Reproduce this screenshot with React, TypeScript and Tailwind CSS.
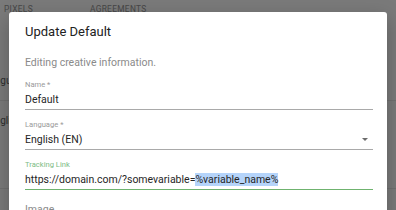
import React from 'react';

const font = { fontFamily: 'Roboto, "Noto Sans", sans-serif' };

function Field({
  label,
  value,
  focused = false,
  select = false,
}: {
  label: string;
  value: React.ReactNode;
  focused?: boolean;
  select?: boolean;
}) {
  return (
    <div className="mt-[10px] first:mt-0">
      <div
        className={`h-[10px] text-[7.6px] leading-[10px] ${focused ? 'text-[#7dbb85]' : 'text-[#9a9a9a]'}`}
      >
        {label}
      </div>
      <div
        className={`relative mt-[2px] pb-[1px] ${
          focused ? 'border-b border-[#6fb36f]' : 'border-b border-[#a9a9a9]'
        }`}
      >
        <div className="h-[16px] whitespace-nowrap text-[10.5px] leading-[16px] text-[#262626]">
          {value}
        </div>
        {select && (
          <svg
            className="absolute right-[5px] top-[6px]"
            width="6"
            height="3"
            viewBox="0 0 6 3"
          >
            <path d="M0 0h6L3 3z" fill="#6b6b6b" />
          </svg>
        )}
      </div>
    </div>
  );
}

export default function App() {
  return (
    <div className="relative h-[210px] w-[396px] overflow-hidden bg-[#7a7a7a]" style={font}>
      {/* page behind the overlay */}
      <div className="flex gap-[57px] pl-[4px] pt-[4px] text-[8.4px] uppercase leading-[10px] tracking-[0.3px] text-[#474747]">
        <span>Pixels</span>
        <span>Agreements</span>
      </div>
      <div className="mt-[61px] -ml-[16px] text-[10px] leading-[12px] text-[#2e2e2e]">Language</div>
      <div className="mt-[13px] h-px w-full bg-[#707070]" />
      <div className="mt-[14px] -ml-[11px] text-[10px] leading-[12px] text-[#2e2e2e]">English</div>
      <div className="mt-[61px] h-px w-full bg-[#707070]" />

      {/* dialog */}
      <div className="absolute left-[9px] top-[12px] h-[230px] w-[378px] rounded-[3px] bg-white pl-[16px] pr-[14px] pt-[10px] shadow-[0_7px_20px_rgba(0,0,0,0.25)]">
        <div className="text-[13px] leading-[20px] text-[#222]">Update Default</div>
        <div className="mt-[13px] text-[10.5px] leading-[16px] text-[#8a8a8a]">
          Editing creative information.
        </div>
        <div className="mt-[9px]">
          <Field label="Name *" value="Default" />
          <Field label="Language *" value="English (EN)" select />
          <Field
            label="Tracking Link"
            focused
            value={
              <>
                https://domain.com/?somevariable=
                <span className="bg-[#b5d4fa]">%variable_name%</span>
              </>
            }
          />
        </div>
        <div className="mt-[12px] text-[10.5px] leading-[16px] text-[#8a8a8a]">Image</div>
      </div>
    </div>
  );
}
